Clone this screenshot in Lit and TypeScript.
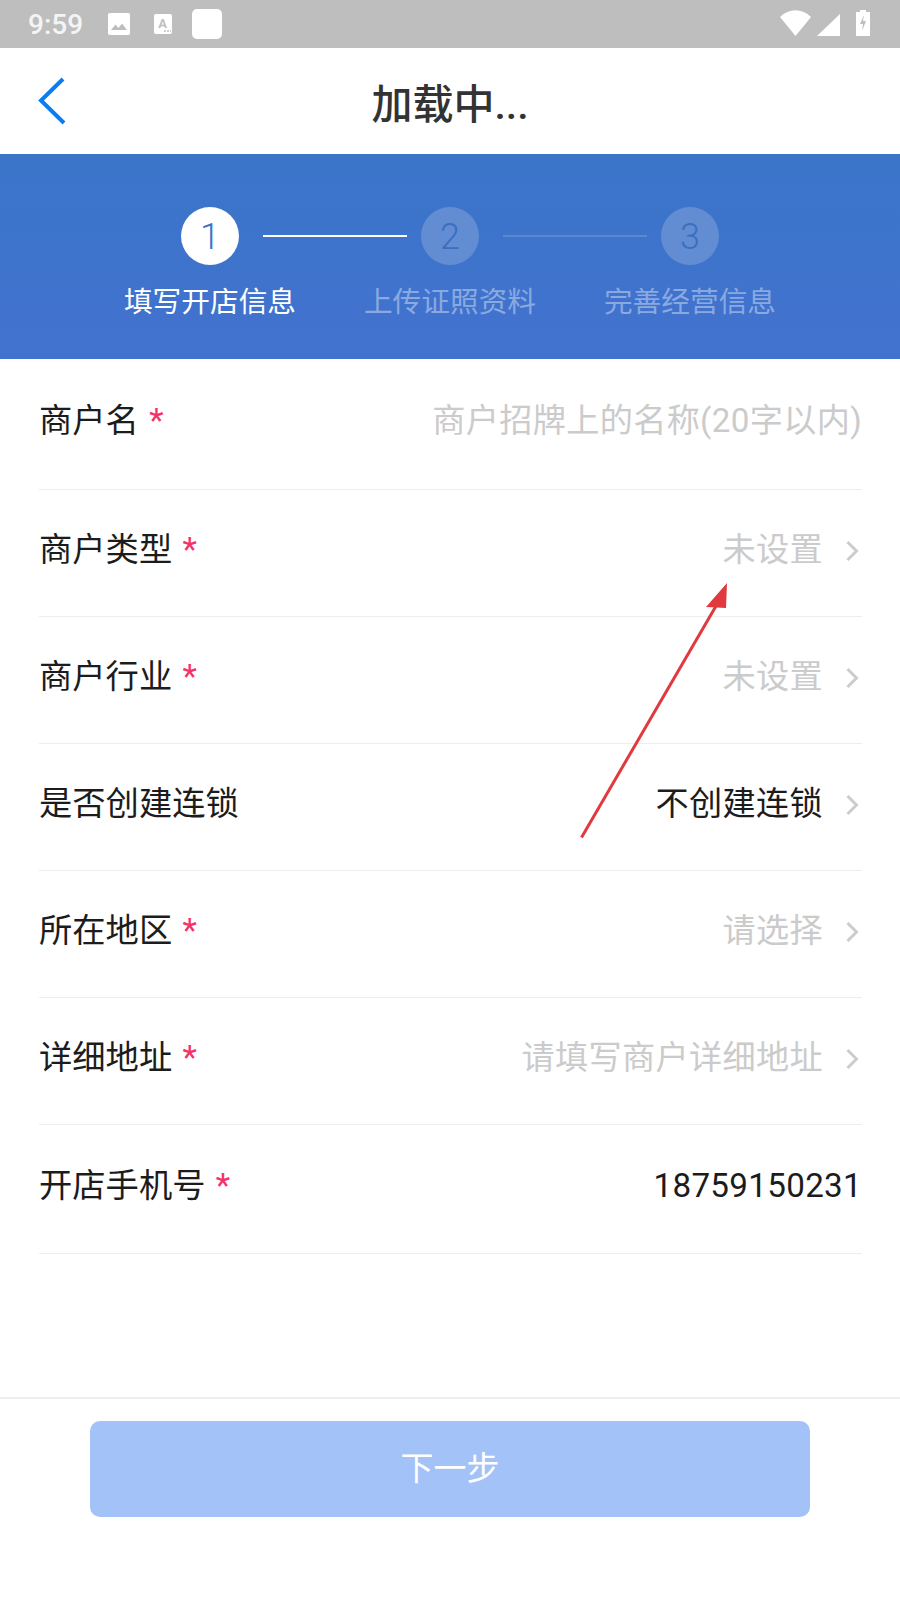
import { LitElement, html, css } from "lit";
import { customElement } from "lit/decorators.js";

const chevron = html`<svg class="chev" viewBox="0 0 14 22" width="14" height="22"><path d="M1.5 2 L10.5 11 L1.5 20" fill="none" stroke="#cccccc" stroke-width="3"/></svg>`;

interface Row { label: string; req: boolean; value: string; filled: boolean; chev: boolean; }
const rows: Row[] = [
  { label: "商户名", req: true, value: "商户招牌上的名称(20字以内)", filled: false, chev: false },
  { label: "商户类型", req: true, value: "未设置", filled: false, chev: true },
  { label: "商户行业", req: true, value: "未设置", filled: false, chev: true },
  { label: "是否创建连锁", req: false, value: "不创建连锁", filled: true, chev: true },
  { label: "所在地区", req: true, value: "请选择", filled: false, chev: true },
  { label: "详细地址", req: true, value: "请填写商户详细地址", filled: false, chev: true },
  { label: "开店手机号", req: true, value: "18759150231", filled: true, chev: false },
];
const steps = [
  { n: "1", t: "填写开店信息", on: true },
  { n: "2", t: "上传证照资料", on: false },
  { n: "3", t: "完善经营信息", on: false },
];

@customElement("app-root")
export class AppRoot extends LitElement {
  static styles = css`
    :host { display: block; position: relative; width: 900px; height: 1600px; background: #fff; overflow: hidden;
      font-family: Roboto, "Noto Sans CJK SC", sans-serif; }
    .status { height: 48px; background: #bebebe; display: flex; align-items: center; padding: 0 28px; box-sizing: border-box; }
    .time { font: 500 28px/32px Roboto, sans-serif; color: #f4f4f4; width: 80px; padding-top: 2px; }
    .status svg { display: block; }
    .si2 { margin-left: 24px; }
    .si3 { margin-left: 20px; }
    .right { margin-left: auto; display: flex; align-items: flex-end; padding: 10px 2px 12px 0; }
    .right .cell { margin-left: 6px; }
    .right .bat { margin-left: 16px; }
    .head { height: 106px; display: flex; align-items: center; justify-content: center; position: relative; box-sizing: border-box; padding-top: 8px; }
    .back { position: absolute; left: 37px; top: 29px; }
    .title { font-size: 41px; font-weight: 500; color: #333; line-height: 50px; }
    .banner { height: 205px; background: linear-gradient(#3a75c9, #4272cf); box-sizing: border-box; padding-top: 53px; display: flex; justify-content: center; }
    .steps { display: grid; grid-template-columns: repeat(3, 240px); }
    .step { display: flex; flex-direction: column; align-items: center; position: relative; }
    .dot { width: 58px; height: 58px; border-radius: 50%; background: #638dd3; color: #3a6fc0; font: 300 36px/60px Roboto, sans-serif; text-align: center; }
    .step.on .dot { background: #fff; color: #3a74c6; }
    .lbl { font-size: 28.7px; line-height: 40px; margin-top: 17px; color: #8aa9e0; white-space: nowrap; }
    .step.on .lbl { color: #fff; }
    .line { position: absolute; height: 2px; width: 144px; top: 28px; left: 173px; background: #5c86d0; }
    .line.on { background: #fff; }
    .form { margin: 0 38px 0 39px; }
    .row { height: 127px; border-bottom: 1px solid #eeeeee; box-sizing: border-box; display: flex; align-items: center; padding-bottom: 6px; }
    .row:first-child { height: 131px; }
    .row:last-child { height: 129px; }
    .label { font-size: 33.3px; color: #1c1c1c; line-height: 44px; white-space: nowrap; }
    .star { color: #f5316a; margin-left: 2px; }
    .val { margin-left: auto; font-size: 33.2px; letter-spacing: 0.3px; line-height: 44px; color: #cbcbcb; white-space: nowrap; }
    .val.filled { color: #1c1c1c; }
    .chev { margin-left: 23px; margin-right: 2px; display: block; margin-top: 2px; }
    .foot { position: absolute; left: 0; right: 0; top: 1397px; border-top: 2px solid #eeeeee; padding-top: 22px; display: flex; justify-content: center; }
    .btn { width: 720px; height: 96px; border-radius: 10px; background: #a2c2f8; color: #fff; font-size: 33px; display: flex; align-items: center; justify-content: center; padding-bottom: 6px; box-sizing: border-box; }
    .arrow { position: absolute; left: 570px; top: 570px; }
  `;

  render() {
    return html`
      <div class="status">
        <span class="time">9:59</span>
        <svg width="22" height="22" viewBox="0 0 22 22"><rect width="22" height="22" rx="2" fill="#fff"/><path d="M3 17 L7.5 11.5 L10.5 15 L14 10.5 L19 17 Z" fill="#bebebe"/></svg>
        <svg class="si2" width="18" height="20" viewBox="0 0 18 20"><rect width="18" height="20" rx="2" fill="#fff"/><text x="8.5" y="13.5" font-size="13" font-weight="700" font-family="Roboto" text-anchor="middle" fill="#bebebe">A</text><path d="M10 17h7" stroke="#bebebe" stroke-width="1.6" stroke-dasharray="2 1"/></svg>
        <svg class="si3" width="30" height="30" viewBox="0 0 30 30"><rect width="30" height="30" rx="5" fill="#fff"/></svg>
        <div class="right">
          <svg width="31" height="26" viewBox="0 0 31 26"><path d="M0 7 C9 -2 22 -2 31 7 L15.5 26 Z" fill="#fff"/></svg>
          <svg class="cell" width="23" height="22" viewBox="0 0 23 22"><path d="M0 22 L23 0 V22 Z" fill="#fff"/></svg>
          <svg class="bat" width="14" height="26" viewBox="0 0 14 26"><path d="M4 0h6v2h4v24H0V2h4z" fill="#fff"/><path d="M8 5 L4 14 H7 L6 21 L10 11 H7 Z" fill="#bebebe"/></svg>
        </div>
      </div>
      <div class="head">
        <svg class="back" width="30" height="48" viewBox="0 0 30 48"><path d="M26 2 L4 23.5 L27 46" fill="none" stroke="#0a7df5" stroke-width="4"/></svg>
        <span class="title">加载中...</span>
      </div>
      <div class="banner">
        <div class="steps">
          ${steps.map((s, i) => html`
            <div class="step ${s.on ? "on" : ""}">
              <div class="dot">${s.n}</div>
              <div class="lbl">${s.t}</div>
              ${i < 2 ? html`<div class="line ${s.on ? "on" : ""}"></div>` : ""}
            </div>`)}
        </div>
      </div>
      <div class="form">
        ${rows.map((r) => html`
          <div class="row">
            <span class="label">${r.label}${r.req ? html`<span class="star"> *</span>` : ""}</span>
            <span class="val ${r.filled ? "filled" : ""}">${r.value}</span>
            ${r.chev ? chevron : ""}
          </div>`)}
      </div>
      <div class="foot"><div class="btn">下一步</div></div>
      <svg class="arrow" width="170" height="280" viewBox="570 570 170 280">
        <path d="M581.5 837.5 L716 606" stroke="#e0393e" stroke-width="3" fill="none"/>
        <path d="M727 583 L706 607 L726 608 Z" fill="#e0393e"/>
      </svg>
    `;
  }
}
